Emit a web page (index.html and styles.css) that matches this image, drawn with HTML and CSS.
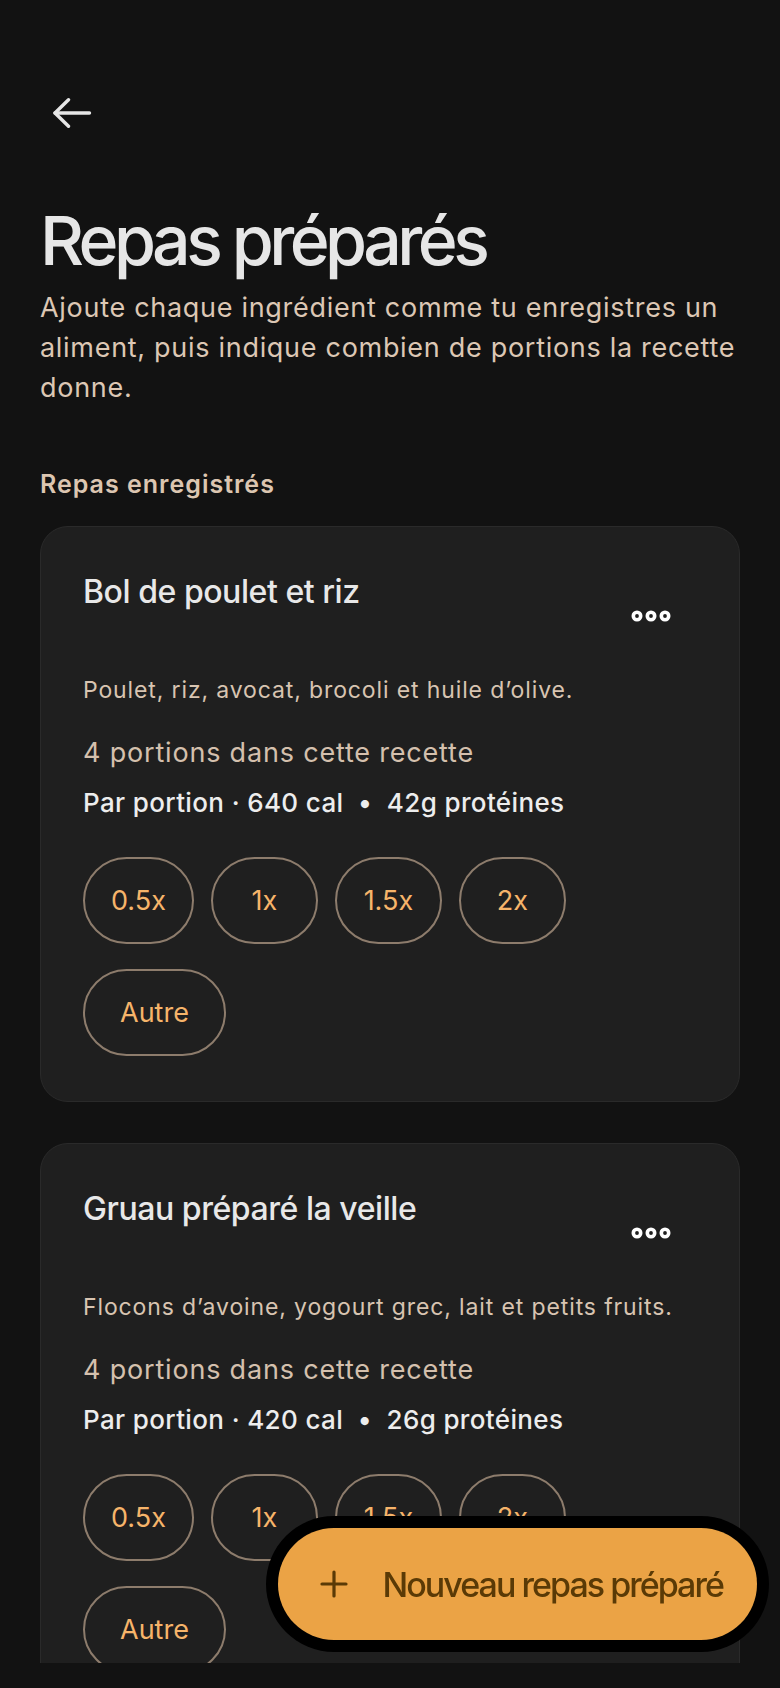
FILE: index.html
```html
<!DOCTYPE html>
<html lang="fr">
<head>
<meta charset="utf-8"/>
<meta content="width=device-width, initial-scale=1" name="viewport"/>
<title>Repas préparés</title>
<link rel="stylesheet" href="styles.css">
</head>
<body>
<div class="screen">
  <main class="content">
    <div class="top-bar">
      <button class="back-btn" aria-label="Retour">
        <svg width="40" height="30" viewBox="0 0 40 30" fill="none" stroke="#e6e6e6" stroke-width="3.4" stroke-linecap="round" stroke-linejoin="round">
          <path d="M37.5 15H3"/>
          <path d="M16.5 1.8L3 15l13.5 13.2"/>
        </svg>
      </button>
    </div>

    <h1 class="title">Repas préparés</h1>
    <p class="intro">Ajoute chaque ingrédient comme tu enregistres un aliment, puis indique combien de portions la recette donne.</p>

    <h2 class="section-label">Repas enregistrés</h2>

    <div class="meal-list">
      <div class="meal-card">
        <div class="meal-head">
          <div class="meal-name">Bol de poulet et riz</div>
          <button class="more-btn" aria-label="Options">
            <svg width="44" height="14" viewBox="0 0 44 14" fill="none" stroke="#fff" stroke-width="3.6">
              <circle cx="8" cy="7" r="3.7"/>
              <circle cx="22" cy="7" r="3.7"/>
              <circle cx="36" cy="7" r="3.7"/>
            </svg>
          </button>
        </div>
        <div class="meal-desc">Poulet, riz, avocat, brocoli et huile d’olive.</div>
        <div class="meal-servings">4 portions dans cette recette</div>
        <div class="meal-macros">Par portion · 640 cal &nbsp;•&nbsp; 42g protéines</div>
        <div class="chips">
          <button class="chip">0.5x</button>
          <button class="chip">1x</button>
          <button class="chip">1.5x</button>
          <button class="chip">2x</button>
          <button class="chip chip-other">Autre</button>
        </div>
      </div>

      <div class="meal-card">
        <div class="meal-head">
          <div class="meal-name">Gruau préparé la veille</div>
          <button class="more-btn" aria-label="Options">
            <svg width="44" height="14" viewBox="0 0 44 14" fill="none" stroke="#fff" stroke-width="3.6">
              <circle cx="8" cy="7" r="3.7"/>
              <circle cx="22" cy="7" r="3.7"/>
              <circle cx="36" cy="7" r="3.7"/>
            </svg>
          </button>
        </div>
        <div class="meal-desc">Flocons d’avoine, yogourt grec, lait et petits fruits.</div>
        <div class="meal-servings">4 portions dans cette recette</div>
        <div class="meal-macros">Par portion · 420 cal &nbsp;•&nbsp; 26g protéines</div>
        <div class="chips">
          <button class="chip">0.5x</button>
          <button class="chip">1x</button>
          <button class="chip">1.5x</button>
          <button class="chip">2x</button>
          <button class="chip chip-other">Autre</button>
        </div>
      </div>
    </div>
  </main>

  <button class="fab">
    <svg width="28" height="28" viewBox="0 0 28 28" fill="none" stroke="#5a3a06" stroke-width="3.2" stroke-linecap="round">
      <path d="M14 2v24"/>
      <path d="M2 14h24"/>
    </svg>
    <span>Nouveau repas préparé</span>
  </button>
</div>
</body>
</html>
```

FILE: styles.css
```css
body {
  margin: 0;
  background: #121212;
  font-family: Inter, "Noto Sans", sans-serif;
  color: #e6e6e6;
}

button {
  font-family: inherit;
  background: none;
  border: none;
  padding: 0;
  cursor: pointer;
}

.screen {
  height: 1688px;
}

.content {
  height: 1663px;
  overflow: hidden;
  padding: 0 40px;
}

.top-bar {
  padding-top: 85px;
  margin-left: 4px;
}

.back-btn {
  width: 56px;
  height: 56px;
  display: flex;
  align-items: center;
  justify-content: center;
}

.title {
  margin: 61px 0 0;
  font-size: 68px;
  line-height: 76px;
  font-weight: 500;
  color: #e6e6e6;
  letter-spacing: -0.067em;
}

.intro {
  margin: 10px 0 0;
  font-size: 27px;
  line-height: 40px;
  color: #dcc7b4;
  letter-spacing: 0.026em;
}

.section-label {
  margin: 61px 0 0;
  font-size: 25px;
  line-height: 30px;
  font-weight: 600;
  color: #dcc6b1;
  letter-spacing: 0.04em;
}

.meal-list {
  margin-top: 27px;
  display: flex;
  flex-direction: column;
  gap: 41px;
}

.meal-card {
  background: #1f1f1f;
  border: 1px solid #2a2a2a;
  border-radius: 28px;
  padding: 45px 42px;
}

.meal-head {
  display: flex;
  justify-content: space-between;
  align-items: flex-start;
}

.meal-name {
  font-size: 32px;
  line-height: 40px;
  font-weight: 500;
  color: #e8e8e8;
  letter-spacing: -0.014em;
}

.more-btn {
  width: 64px;
  height: 48px;
  margin-top: 20px;
  margin-right: 14px;
  display: flex;
  align-items: center;
  justify-content: center;
}

.meal-desc {
  margin-top: 35px;
  font-size: 23px;
  line-height: 30px;
  color: #d8c4b1;
  letter-spacing: 0.038em;
}

.meal-servings {
  margin-top: 32px;
  font-size: 27px;
  line-height: 32px;
  color: #d4c0ad;
  letter-spacing: 0.03em;
}

.meal-macros {
  margin-top: 17px;
  font-size: 26px;
  line-height: 34px;
  font-weight: 500;
  color: #ededed;
  letter-spacing: 0.014em;
}

.chips {
  margin-top: 37px;
  display: flex;
  flex-wrap: wrap;
  gap: 25px 17px;
  width: 500px;
}

.chip {
  min-width: 107px;
  height: 87px;
  padding: 0 26px;
  border: 2px solid #8d7c6c;
  border-radius: 999px;
  font-size: 27px;
  color: #f6b46a;
}

.chip-other {
  padding: 0 35px;
}

.fab {
  position: fixed;
  right: 23px;
  bottom: 48px;
  height: 112px;
  padding: 0 34px 0 42px;
  display: flex;
  align-items: center;
  gap: 35px;
  background: #eba345;
  border-radius: 56px;
  box-shadow: 0 0 0 12px #000;
  font-size: 34px;
  font-weight: 500;
  color: #5a3a06;
  letter-spacing: -0.058em;
}
```
